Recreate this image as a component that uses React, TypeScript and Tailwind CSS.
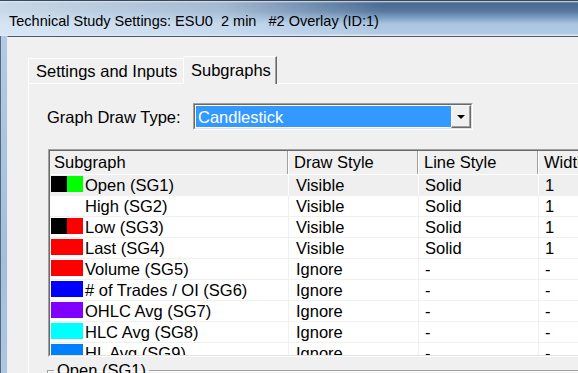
import React from 'react';

type Row = {
  name: string;
  swatch: string[]; // full tailwind bg classes
  draw: string;
  line: string;
  width: string;
  active?: boolean;
};

const rows: Row[] = [
  { name: 'Open (SG1)', swatch: ['bg-[#000000]', 'bg-[#00ff00]'], draw: 'Visible', line: 'Solid', width: '1', active: true },
  { name: 'High (SG2)', swatch: [], draw: 'Visible', line: 'Solid', width: '1' },
  { name: 'Low (SG3)', swatch: ['bg-[#000000]', 'bg-[#ff0000]'], draw: 'Visible', line: 'Solid', width: '1' },
  { name: 'Last (SG4)', swatch: ['bg-[#ff0000]'], draw: 'Visible', line: 'Solid', width: '1' },
  { name: 'Volume (SG5)', swatch: ['bg-[#ff0000]'], draw: 'Ignore', line: '-', width: '-' },
  { name: '# of Trades / OI (SG6)', swatch: ['bg-[#0000ff]'], draw: 'Ignore', line: '-', width: '-' },
  { name: 'OHLC Avg (SG7)', swatch: ['bg-[#8000ff]'], draw: 'Ignore', line: '-', width: '-' },
  { name: 'HLC Avg (SG8)', swatch: ['bg-[#00ffff]'], draw: 'Ignore', line: '-', width: '-' },
  { name: 'HL Avg (SG9)', swatch: ['bg-[#0080ff]'], draw: 'Ignore', line: '-', width: '-' },
];

function Swatch({ colors }: { colors: string[] }) {
  return (
    <div className="ml-[1px] mt-[1px] flex h-[16px] w-[32px] shrink-0 self-start">
      {colors.map((c, i) => (
        <div key={i} className={`h-full flex-1 ${c}`} />
      ))}
    </div>
  );
}

export default function App() {
  return (
    <div className="flex h-[373px] w-[578px] flex-col overflow-hidden bg-[#f0f0f0] font-['Liberation_Sans',Arial,sans-serif] text-black">
      {/* Title bar (Aero glass) */}
      <div className="h-[36px] shrink-0 border-t border-[#39495b] bg-[linear-gradient(90deg,rgba(222,234,246,0.85)_0%,rgba(212,227,243,0.65)_38%,rgba(200,220,240,0)_66%),linear-gradient(180deg,#dbe6f0_0px,#4a6a8f_2px,#55779e_10px,#86a7c9_18px,#abc5e0_23px,#b2cae4_33px,#dfe9f3_34px)] pl-[9px] pt-[12px]">
        <div className="whitespace-pre text-[14.5px] leading-[17px]">
          Technical Study Settings: ESU0  2 min   #2 Overlay (ID:1)
        </div>
      </div>

      <div className="flex flex-1">
        {/* Left window frame */}
        <div className="w-[7px] shrink-0 border-l border-[#55697f] bg-[linear-gradient(180deg,#b3cae2,#a4bedb_50%,#b9cfe6)]" />

        {/* Client area */}
        <div className="flex-1 border-l border-t border-l-[#e8eef5] border-t-[#4a5a6c] pl-[20px] pt-[19px]">
          {/* Tabs */}
          <div className="flex h-[27px] items-end text-[16.5px]">
            <div className="flex h-[25px] w-[155px] items-center rounded-tl-[2px] border-l border-t border-white pl-[7px]">
              Settings and Inputs
            </div>
            <div className="relative z-10 -mb-px flex h-[28px] w-[94px] items-center rounded-tl-[2px] border-l border-r border-t border-l-white border-r-[#696969] border-t-white bg-[#f0f0f0] pb-px pl-[7px] shadow-[inset_-1px_0_0_#a0a0a0]">
              Subgraphs
            </div>
          </div>

          {/* Tab panel */}
          <div className="h-[400px] border-l border-t border-white pl-[18px] pt-[19px] text-[16.5px]">
            {/* Graph Draw Type */}
            <div className="flex h-[27px] items-center">
              <div className="w-[146px] shrink-0 pt-px">Graph Draw Type:</div>
              <div className="h-[27px] w-[280px] border border-b-white border-l-[#a0a0a0] border-r-white border-t-[#a0a0a0]">
                <div className="flex h-full border border-b-[#e3e3e3] border-l-[#696969] border-r-[#e3e3e3] border-t-[#696969] bg-white">
                  <div className="my-[1px] ml-[1px] flex flex-1 items-center bg-[#3399ff] pl-[2px] pt-px text-white">
                    Candlestick
                  </div>
                  <div className="flex w-[20px] items-center justify-center border border-b-[#696969] border-l-[#f8f8f8] border-r-[#696969] border-t-[#f8f8f8] bg-[#f0f0f0] shadow-[inset_-1px_-1px_0_#a0a0a0]">
                    <svg width="8" height="4" viewBox="0 0 8 4">
                      <path d="M0 0H8L4 4Z" fill="#000" />
                    </svg>
                  </div>
                </div>
              </div>
            </div>

            {/* Subgraph list */}
            <div className="ml-[1px] mt-[19px] h-[208px] w-[600px] border border-b-white border-l-[#a0a0a0] border-r-white border-t-[#a0a0a0]">
              <div className="flex h-full flex-col overflow-hidden border border-b-[#e3e3e3] border-l-[#696969] border-r-[#e3e3e3] border-t-[#696969] bg-white">
                {/* Header */}
                <div className="flex h-[24px] shrink-0 border-b border-white bg-[#f0f0f0]">
                  <div className="flex w-[238px] items-center border-r border-[#a0a0a0] pl-[4px] shadow-[1px_0_0_#ffffff]">Subgraph</div>
                  <div className="flex w-[130px] items-center border-r border-[#a0a0a0] pl-[6px] shadow-[1px_0_0_#ffffff]">Draw Style</div>
                  <div className="flex w-[120px] items-center border-r border-[#a0a0a0] pl-[6px] shadow-[1px_0_0_#ffffff]">Line Style</div>
                  <div className="flex flex-1 items-center pl-[6px]">Width</div>
                </div>

                {/* Rows */}
                {rows.map((r) => (
                  <div
                    key={r.name}
                    className={`flex h-[21px] shrink-0 border-b ${r.active ? 'border-[#f0f0f0] bg-[#efefef]' : 'border-[#f0f0f0] bg-white'}`}
                  >
                    <div className={`flex w-[239px] items-center border-r ${r.active ? 'border-white' : 'border-[#f0f0f0]'}`}>
                      {r.swatch.length > 0 ? <Swatch colors={r.swatch} /> : <div className="ml-[1px] w-[32px] shrink-0" />}
                      <span className="ml-[2px] whitespace-nowrap pt-px">{r.name}</span>
                    </div>
                    <div className={`flex w-[130px] items-center border-r pl-[7px] pt-px ${r.active ? 'border-white' : 'border-[#f0f0f0]'}`}>
                      {r.draw}
                    </div>
                    <div className={`flex w-[120px] items-center border-r pl-[6px] pt-px ${r.active ? 'border-white' : 'border-[#f0f0f0]'}`}>
                      {r.line}
                    </div>
                    <div className="flex flex-1 items-center pl-[6px] pt-px">{r.width}</div>
                  </div>
                ))}
              </div>
            </div>

            {/* Group box */}
            <fieldset className="mt-[4px] h-[80px] w-[600px] border-l border-t border-[#a0a0a0] shadow-[inset_1px_1px_0_#ffffff]">
              <legend className="ml-[6px] px-[3px] leading-[19px]">Open (SG1)</legend>
            </fieldset>
          </div>
        </div>
      </div>
    </div>
  );
}
